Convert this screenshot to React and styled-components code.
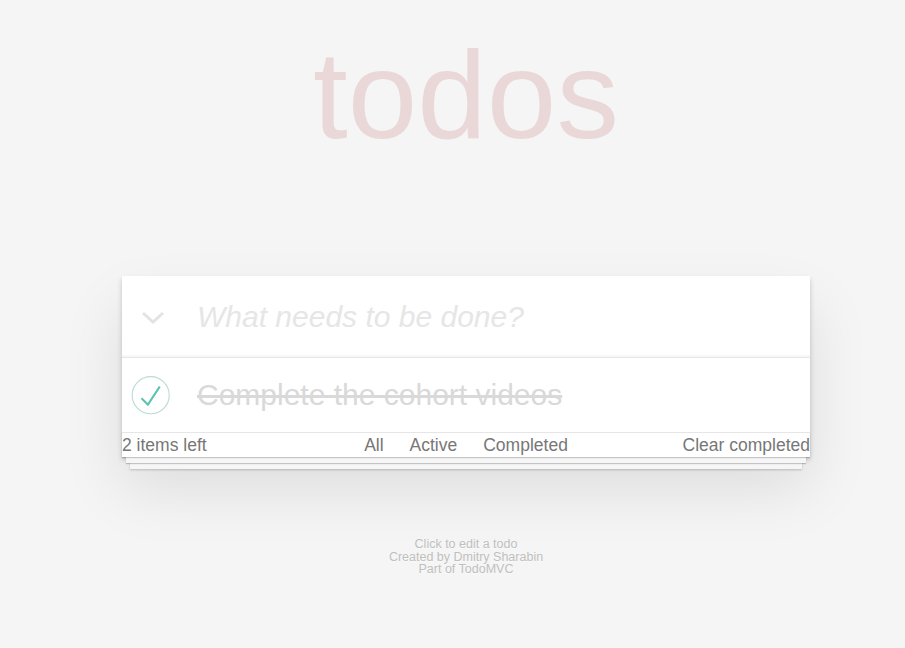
import React from 'react';
import styled, { createGlobalStyle } from 'styled-components';

const GlobalStyle = createGlobalStyle`
    html, body {
        margin: 0;
        padding: 0;
    }
    body {
        background: #f5f5f5;
        color: #4d4d4d;
        font-family: "Liberation Sans", Arial, sans-serif;
        font-size: 17.5px;
        line-height: 1.4em;
        font-weight: 300;
    }
    * {
        box-sizing: border-box;
    }
`;

const Page = styled.div`
    width: 688px;
    margin: 0 0 0 122px;
    padding-top: 32px;
`;

const Title = styled.h1`
    margin: 0;
    font-size: 125px;
    line-height: 125px;
    font-weight: 100;
    text-align: center;
    color: rgba(175, 47, 47, 0.15);
`;

const TodoApp = styled.section`
    margin-top: 119px;
    background: #fff;
    box-shadow: 0 2.5px 5px 0 rgba(0, 0, 0, 0.2), 0 31px 62px 0 rgba(0, 0, 0, 0.1);
`;

const Header = styled.header`
    display: flex;
    align-items: center;
    height: 81px;
    box-shadow: inset 0 -2px 1px rgba(0, 0, 0, 0.03);
`;

const ToggleAll = styled.div`
    width: 75px;
    flex-shrink: 0;
    display: flex;
    padding-left: 19px;
    padding-top: 2px;
    svg {
        display: block;
    }
`;

const NewTodo = styled.input`
    flex: 1;
    border: none;
    outline: none;
    background: transparent;
    font-family: inherit;
    font-size: 30px;
    font-weight: 300;
    padding: 0;
    color: #4d4d4d;
    &::placeholder {
        font-style: italic;
        color: #e6e6e6;
    }
`;

const TodoList = styled.ul`
    margin: 0;
    padding: 0;
    list-style: none;
    border-top: 1px solid #e6e6e6;
`;

const TodoItem = styled.li`
    display: flex;
    align-items: center;
    height: 74px;
    font-size: 30px;
`;

const Check = styled.div`
    width: 75px;
    flex-shrink: 0;
    display: flex;
    align-items: center;
    svg {
        display: block;
    }
`;

const Label = styled.label`
    line-height: 1.2;
    color: ${props => (props.done ? '#d9d9d9' : '#4d4d4d')};
    text-decoration: ${props => (props.done ? 'line-through' : 'none')};
`;

const Footer = styled.footer`
    display: grid;
    grid-template-columns: 1fr auto 1fr;
    align-items: center;
    height: 25px;
    border-top: 1px solid #e6e6e6;
    color: #777;
    font-size: 17.5px;
    line-height: 24px;
    box-shadow: 0 1px 1px rgba(0, 0, 0, 0.2),
        0 10px 0 -4px #f6f6f6,
        0 11px 1px -4px rgba(0, 0, 0, 0.2),
        0 20px 0 -8px #f6f6f6,
        0 21px 2px -8px rgba(0, 0, 0, 0.2);
`;

const Count = styled.span`
    justify-self: start;
`;

const Filters = styled.ul`
    display: flex;
    gap: 26px;
    margin: 0;
    padding: 0;
    list-style: none;
    a {
        color: inherit;
        text-decoration: none;
    }
`;

const ClearButton = styled.button`
    justify-self: end;
    border: none;
    background: none;
    padding: 0;
    font: inherit;
    color: inherit;
    line-height: 24px;
`;

const Info = styled.footer`
    margin-top: 81px;
    text-align: center;
    color: #bfbfbf;
    font-size: 12.5px;
    text-shadow: 0 1px 0 rgba(255, 255, 255, 0.5);
    p {
        margin: 0;
        line-height: 1;
    }
`;

const Chevron = () => (
    <svg width="24" height="14" viewBox="0 0 24 14">
        <polyline points="2,2 12,11 22,2" fill="none" stroke="#e3e3e3" strokeWidth="3" />
    </svg>
);

const CheckCircle = () => (
    <svg width="50" height="50" viewBox="-10 -18 100 135">
        <circle cx="50" cy="50" r="50" fill="none" stroke="#bddad5" strokeWidth="3" />
        <path fill="#5dc2af" d="M72 25L42 71 27 56l-4 4 20 20 34-52z" />
    </svg>
);

export default function App() {
    return (
        <>
            <GlobalStyle />
            <Page>
                <Title>todos</Title>
                <TodoApp>
                    <Header>
                        <ToggleAll><Chevron /></ToggleAll>
                        <NewTodo placeholder="What needs to be done?" />
                    </Header>
                    <TodoList>
                        <TodoItem>
                            <Check><CheckCircle /></Check>
                            <Label done>Complete the cohort videos</Label>
                        </TodoItem>
                    </TodoList>
                    <Footer>
                        <Count>2 items left</Count>
                        <Filters>
                            <li><a href="#/">All</a></li>
                            <li><a href="#/active">Active</a></li>
                            <li><a href="#/completed">Completed</a></li>
                        </Filters>
                        <ClearButton>Clear completed</ClearButton>
                    </Footer>
                </TodoApp>
                <Info>
                    <p>Click to edit a todo</p>
                    <p>Created by Dmitry Sharabin</p>
                    <p>Part of TodoMVC</p>
                </Info>
            </Page>
        </>
    );
}
